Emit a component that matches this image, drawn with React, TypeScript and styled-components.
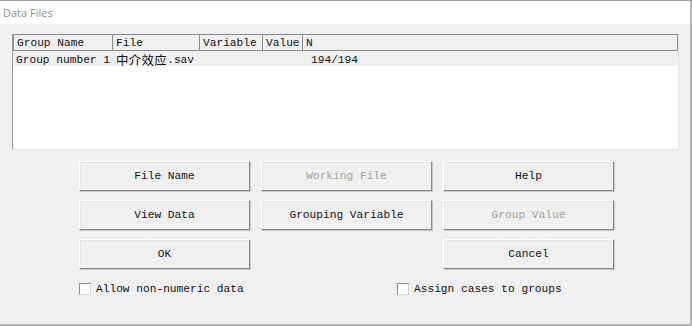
import React from "react";
import styled, { createGlobalStyle } from "styled-components";

const Global = createGlobalStyle`
  html, body { margin: 0; padding: 0; background: #ffffff; }
  body { width: 692px; height: 326px; overflow: hidden; }
  * { box-sizing: border-box; }
`;

const MONO = `"Liberation Mono", "Noto Sans CJK SC", monospace`;

const Window = styled.div`
  width: 692px;
  height: 326px;
  background: #f0f0f0;
  border-top: 1px solid #9c9c9c;
  border-right: 2px solid #b4b4b4;
  border-bottom: 2px solid #b4b4b4;
  display: flex;
  flex-direction: column;
  font-family: ${MONO};
  font-size: 11.2px;
  color: #111;
`;

const TitleBar = styled.div`
  height: 23px;
  flex: none;
  background: #ffffff;
  display: flex;
  align-items: center;
  padding-left: 3px;
  font-family: "Open Sans", "Noto Sans", sans-serif;
  font-size: 11px;
  color: #8e8e8e;
`;

const Body = styled.div`
  flex: 1;
  padding: 10px 0 0 12px;
  display: flex;
  flex-direction: column;
`;

const ListBox = styled.div`
  width: 667px;
  height: 116px;
  background: #ffffff;
  border-left: 1px solid #9a9a9a;
  border-bottom: 1px solid #e4e4e4;
  border-right: 1px solid #e4e4e4;
  display: flex;
  flex-direction: column;
`;

const Header = styled.div`
  display: grid;
  grid-template-columns: 99px 87px 63px 40px 1fr;
  height: 17px;
  background: #f0f0f0;
  border: 1px solid #8c8c8c;
`;

const HeadCell = styled.div<{ $last?: boolean }>`
  display: flex;
  align-items: center;
  padding-left: 3px;
  border-right: ${(p) => (p.$last ? "none" : "1px solid #8c8c8c")};
  white-space: nowrap;
  overflow: hidden;
`;

const Row = styled.div`
  display: grid;
  grid-template-columns: 99px 87px 63px 40px 1fr;
  height: 15px;
  margin-left: 1px;
  background: #f0f0f0;
`;

const Cell = styled.div<{ $pad?: number }>`
  display: flex;
  align-items: center;
  padding-left: ${(p) => p.$pad ?? 3}px;
  white-space: nowrap;
`;

const Han = styled.span`
  font-family: "Noto Sans CJK SC", sans-serif;
  font-size: 12.4px;
  letter-spacing: 0.4px;
`;

const Buttons = styled.div`
  display: grid;
  grid-template-columns: repeat(3, 171px);
  grid-template-rows: 30px 30px 30px;
  column-gap: 11px;
  row-gap: 9px;
  margin: 11px 0 0 67px;
`;

const Button = styled.button<{ $disabled?: boolean }>`
  all: unset;
  box-sizing: border-box;
  display: flex;
  align-items: center;
  justify-content: center;
  background: #f0f0f0;
  border-top: 1px solid #ffffff;
  border-left: 1px solid #ffffff;
  border-right: 1px solid #8a8a8a;
  border-bottom: 1px solid #8a8a8a;
  box-shadow: 1px 1px 0 #c6c6c6, inset 1px 1px 0 #e6e6e6;
  font-family: ${MONO};
  font-size: 11.2px;
  color: ${(p) => (p.$disabled ? "#a3a3a3" : "#111")};
`;

const Spacer = styled.div``;

const Checks = styled.div`
  display: grid;
  grid-template-columns: 318px auto;
  margin: 14px 0 0 67px;
`;

const CheckItem = styled.label`
  display: flex;
  align-items: center;
  gap: 5px;
  height: 12px;
  white-space: nowrap;
`;

const Box = styled.span`
  width: 12px;
  height: 12px;
  flex: none;
  background: #ffffff;
  border-top: 1px solid #8c8c8c;
  border-left: 1px solid #8c8c8c;
  border-right: 1px solid #d8d8d8;
  border-bottom: 1px solid #d8d8d8;
`;

export default function App() {
  return (
    <>
      <Global />
      <Window>
        <TitleBar>Data Files</TitleBar>
        <Body>
          <ListBox>
            <Header>
              <HeadCell>Group Name</HeadCell>
              <HeadCell>File</HeadCell>
              <HeadCell>Variable</HeadCell>
              <HeadCell>Value</HeadCell>
              <HeadCell $last>N</HeadCell>
            </Header>
            <Row>
              <Cell $pad={2}>Group number 1</Cell>
              <Cell>
                <Han>中介效应</Han>.sav
              </Cell>
              <Cell />
              <Cell />
              <Cell $pad={8}>194/194</Cell>
            </Row>
          </ListBox>
          <Buttons>
            <Button>File Name</Button>
            <Button $disabled>Working File</Button>
            <Button>Help</Button>
            <Button>View Data</Button>
            <Button>Grouping Variable</Button>
            <Button $disabled>Group Value</Button>
            <Button>OK</Button>
            <Spacer />
            <Button>Cancel</Button>
          </Buttons>
          <Checks>
            <CheckItem>
              <Box />
              Allow non-numeric data
            </CheckItem>
            <CheckItem>
              <Box />
              Assign cases to groups
            </CheckItem>
          </Checks>
        </Body>
      </Window>
    </>
  );
}
